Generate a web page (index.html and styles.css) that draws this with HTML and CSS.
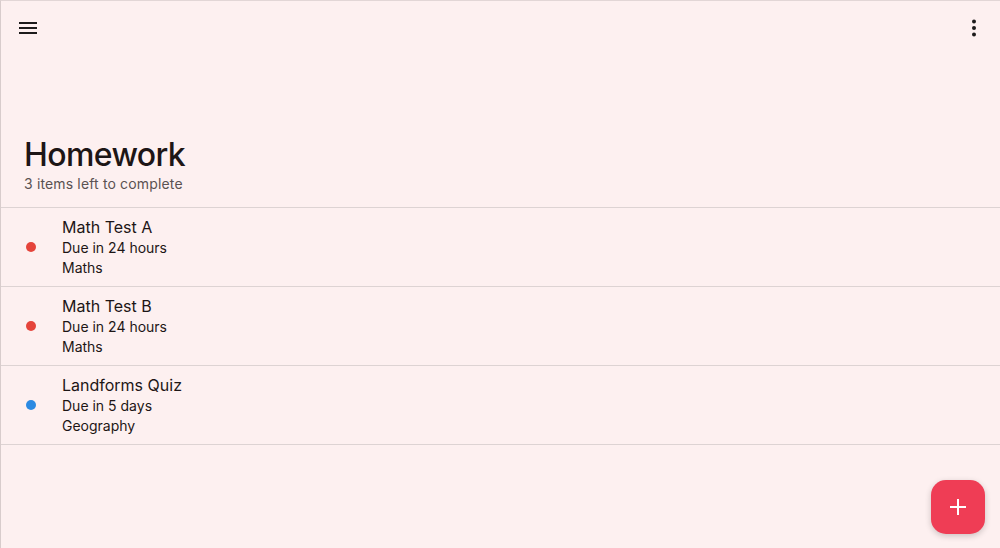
FILE: index.html
```html
<!DOCTYPE html>
<html lang="en">
<head>
    <meta charset="UTF-8">
    <meta name="viewport" content="width=device-width, initial-scale=1.0">
    <title>Homework</title>
    <link rel="stylesheet" href="styles.css">
</head>
<body>
    <div class="app">
        <header class="toolbar">
            <button class="icon-btn" aria-label="Menu">
                <svg width="24" height="24" viewBox="0 0 24 24"><path d="M3 6h18v2H3zM3 11h18v2H3zM3 16h18v2H3z" fill="#1d1b1b"/></svg>
            </button>
            <button class="icon-btn" aria-label="More">
                <svg width="24" height="24" viewBox="0 0 24 24"><circle cx="12" cy="5.5" r="2" fill="#1d1b1b"/><circle cx="12" cy="12" r="2" fill="#1d1b1b"/><circle cx="12" cy="18.5" r="2" fill="#1d1b1b"/></svg>
            </button>
        </header>

        <div class="heading">
            <h1>Homework</h1>
            <p class="subtitle">3 items left to complete</p>
        </div>

        <ul class="task-list">
            <li class="task">
                <span class="dot red"></span>
                <div class="task-text">
                    <div class="task-title">Math Test A</div>
                    <div class="task-line">Due in 24 hours</div>
                    <div class="task-line">Maths</div>
                </div>
            </li>
            <li class="task">
                <span class="dot red"></span>
                <div class="task-text">
                    <div class="task-title">Math Test B</div>
                    <div class="task-line">Due in 24 hours</div>
                    <div class="task-line">Maths</div>
                </div>
            </li>
            <li class="task">
                <span class="dot blue"></span>
                <div class="task-text">
                    <div class="task-title">Landforms Quiz</div>
                    <div class="task-line">Due in 5 days</div>
                    <div class="task-line">Geography</div>
                </div>
            </li>
        </ul>

        <button class="fab" aria-label="Add">
            <svg width="20" height="20" viewBox="0 0 20 20"><path d="M9 2h2v16H9zM2 9h16v2H2z" fill="#fff"/></svg>
        </button>
    </div>
</body>
</html>
```

FILE: styles.css
```css
html, body {
    margin: 0;
    padding: 0;
    height: 100%;
}
body {
    font-family: Inter, "Open Sans", sans-serif;
    background: #fdf0f0;
    color: #1d1b1b;
}
.app {
    position: relative;
    height: 548px;
    box-sizing: border-box;
    border-left: 1px solid #d8cccc;
    border-top: 1px solid #e2d6d6;
    overflow: hidden;
}
.toolbar {
    display: flex;
    justify-content: space-between;
    align-items: center;
    height: 54px;
    padding: 0 14px 0 15px;
}
.icon-btn {
    background: none;
    border: none;
    padding: 0;
    width: 24px;
    height: 24px;
    cursor: pointer;
}
.icon-btn svg {
    display: block;
}
.heading {
    padding: 80px 23px 14px;
}
h1 {
    margin: 0;
    font-size: 32px;
    font-weight: 500;
    letter-spacing: -0.6px;
    line-height: 40px;
    color: #1d1616;
}
.subtitle {
    margin: 0;
    font-size: 14px;
    line-height: 18px;
    letter-spacing: 0.15px;
    color: #5a5252;
}
.task-list {
    list-style: none;
    margin: 0;
    padding: 0;
    border-top: 1px solid #ddd3d3;
}
.task {
    display: flex;
    align-items: center;
    height: 78px;
    border-bottom: 1px solid #ddd3d3;
}
.dot {
    width: 10px;
    height: 10px;
    border-radius: 50%;
    margin: 0 26px 0 25px;
}
.red {
    background: #e5443b;
}
.blue {
    background: #2b8ae2;
}
.task-text {
    display: flex;
    flex-direction: column;
}
.task-title {
    font-size: 16px;
    line-height: 22px;
    color: #1d1616;
}
.task-line {
    font-size: 14px;
    line-height: 20px;
    color: #1d1616;
}
.fab {
    position: absolute;
    right: 15px;
    bottom: 14px;
    width: 54px;
    height: 54px;
    border: none;
    border-radius: 15px;
    background: #ef3d55;
    box-shadow: 0 2px 6px rgba(0, 0, 0, 0.2);
    display: flex;
    align-items: center;
    justify-content: center;
    cursor: pointer;
}
```
